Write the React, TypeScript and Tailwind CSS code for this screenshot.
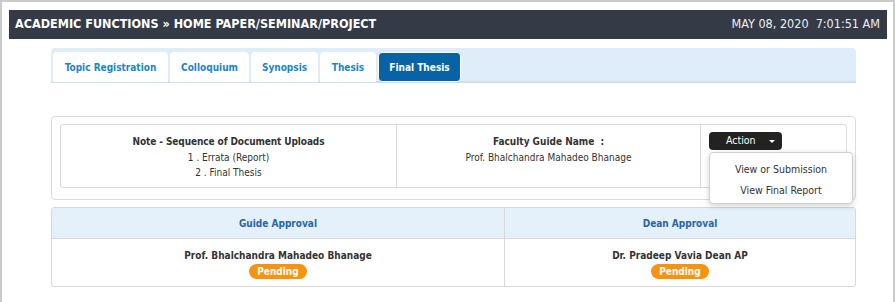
import React from "react";

const F = "font-['DejaVu_Sans_Condensed','DejaVu_Sans',sans-serif]";

function Tab({ label, w, active }: { label: string; w: string; active?: boolean }) {
  return (
    <div
      className={
        "h-[30px] flex items-center justify-center rounded-t-[4px] text-[10px] font-bold " +
        w +
        (active ? " bg-[#0863a6] text-white rounded-[4px] border border-white" : " bg-white text-[#1b86c6]")
      }
    >
      {label}
    </div>
  );
}

export default function App() {
  return (
    <div className={"w-[895px] h-[302px] bg-white border-t-2 border-l-2 border-r-2 border-[#cbcbcb] overflow-hidden " + F}>
      <div className="mt-[8px] ml-[7px] mr-[6px] h-[29px] bg-[#343a46] flex items-center justify-between pl-[6px] pr-[7px]">
        <div className="text-white font-bold text-[12.5px]">ACADEMIC FUNCTIONS » HOME PAPER/SEMINAR/PROJECT</div>
        <div className="text-[#eef0f3] text-[12.5px] whitespace-pre">MAY 08, 2020  7:01:51 AM</div>
      </div>

      <div className="ml-[49px] mr-[37px]">
        <div className="mt-[9px] h-[35px] bg-[#deedf9] rounded-t-[4px] border-b-2 border-[#cfdeea] pl-[2px] pt-[4px] flex gap-[2px]">
          <Tab label="Topic Registration" w="w-[115px]" />
          <Tab label="Colloquium" w="w-[79px]" />
          <Tab label="Synopsis" w="w-[67px]" />
          <Tab label="Thesis" w="w-[56px]" />
          <Tab label="Final Thesis" w="w-[83px]" active />
        </div>

        <div className="mt-[33px] border border-[#dcdcdc] rounded-[4px] pt-[7px] px-[8px] pb-[11px] relative">
          <div className="flex border border-[#dcdcdc] rounded-[3px] h-[64px] text-[10px] text-[#333]">
            <div className="w-[336px] border-r border-[#dcdcdc] flex flex-col items-center pt-[9px] leading-[15.5px]">
              <div className="font-bold tracking-[-0.1px]">Note - Sequence of Document Uploads</div>
              <div>1 . Errata (Report)</div>
              <div>2 . Final Thesis</div>
            </div>
            <div className="w-[304px] border-r border-[#dcdcdc] flex flex-col items-center pt-[9px] leading-[16px]">
              <div className="font-bold whitespace-pre">Faculty Guide Name  :</div>
              <div>Prof. Bhalchandra Mahadeo Bhanage</div>
            </div>
            <div className="flex-1 relative pt-[7px] pl-[8px]">
              <div className="w-[73px] h-[18px] bg-[#222] rounded-[4px] flex items-center text-white text-[10.5px]">
                <span className="ml-[17px]">Action</span>
                <span className="ml-[13px] w-0 h-0 border-l-[3px] border-r-[3px] border-t-[3px] border-l-transparent border-r-transparent border-t-white"></span>
              </div>
              <div className="absolute left-[8px] top-[27px] w-[144px] h-[52px] bg-white border border-[#d0d0d0] rounded-[4px] shadow-[0_2px_6px_rgba(0,0,0,0.18)] z-10 flex flex-col items-center text-[10.5px] text-[#333]">
                <div className="mt-[8px] h-[16px] leading-[16px]">View or Submission</div>
                <div className="mt-[5px] h-[16px] leading-[16px]">View Final Report</div>
              </div>
            </div>
          </div>
        </div>

        <div className="mt-[7px] border border-[#d8d8d8] rounded-[3px] overflow-hidden">
          <div className="flex h-[31px] bg-[#e4f0fa] border-b border-[#d8d8d8] text-[10px] font-bold text-[#2a65a4]">
            <div className="w-[453px] flex items-center justify-center border-r border-[#d8d8d8]">Guide Approval</div>
            <div className="flex-1 flex items-center justify-center">Dean Approval</div>
          </div>
          <div className="flex h-[47px] text-[10px] text-[#333]">
            <div className="w-[453px] flex flex-col items-center pt-[10px] border-r border-[#d8d8d8]">
              <div className="font-bold leading-[14px]">Prof. Bhalchandra Mahadeo Bhanage</div>
              <div className="mt-[1px] h-[15px] px-[8px] rounded-full bg-[#f7930f] text-white font-bold leading-[15px]">Pending</div>
            </div>
            <div className="flex-1 flex flex-col items-center pt-[10px]">
              <div className="font-bold leading-[14px]">Dr. Pradeep Vavia Dean AP</div>
              <div className="mt-[1px] h-[15px] px-[8px] rounded-full bg-[#f7930f] text-white font-bold leading-[15px]">Pending</div>
            </div>
          </div>
        </div>
      </div>
    </div>
  );
}
